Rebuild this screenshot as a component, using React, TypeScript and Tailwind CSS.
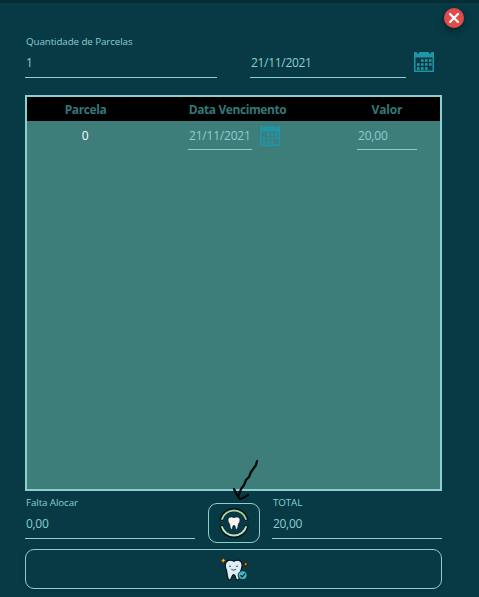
import React from "react";

const CALENDAR_DOTS = [
  [7, 8], [11, 8], [15, 8],
  [3, 12], [7, 12], [11, 12], [15, 12],
  [3, 16], [7, 16], [11, 16],
];

function CalendarIcon({ className = "" }: { className?: string }) {
  return (
    <svg width="20" height="20" viewBox="0 0 20 20" className={`shrink-0 ${className}`}>
      <path
        fillRule="evenodd"
        fill="#2195a8"
        d="M0 0H2.6Q2.8 1.6 4 1.6T5.4 0H14.6Q14.8 1.6 16 1.6T17.4 0H20V20H0ZM1.5 5.5V18.5H18.5V5.5Z"
      />
      {CALENDAR_DOTS.map(([x, y]) => (
        <rect key={`${x}-${y}`} x={x} y={y - 0.8} width="2.6" height="2.6" fill="#2195a8" />
      ))}
    </svg>
  );
}

function CloseButton() {
  return (
    <button className="size-5 rounded-full bg-[#e24b4b] shadow-[0_3px_7px_rgba(0,0,0,0.4)]">
      <svg width="20" height="20" viewBox="0 0 20 20">
        <path d="M6 6L14 14M14 6L6 14" stroke="#fff" strokeWidth="2.2" strokeLinecap="round" />
      </svg>
    </button>
  );
}

function ToothRing() {
  return (
    <svg width="28" height="28" viewBox="0 0 28 28" overflow="visible">
      <g fill="none">
        <g stroke="#04171b" strokeWidth="3.8">
          <path d="M1.2 11.5A13 13 0 0 1 26.8 11.5" />
          <path d="M1.2 16.5A13 13 0 0 0 26.8 16.5" />
        </g>
        <path d="M1.7 10.7A12.8 12.8 0 0 1 26.3 10.7" stroke="#a9cda0" strokeWidth="1.9" />
        <path d="M1.7 17.3A12.8 12.8 0 0 0 26.3 17.3" stroke="#c5dfc2" strokeWidth="1.9" />
      </g>
      <path
        d="M14 8.7C11.5 7.2 8.3 7.8 8 10.7C7.8 13.2 9.6 14.1 9.9 16.2C10.2 18.4 10.1 20.3 11.5 20.3C12.8 20.3 12.4 16.2 14 16.2S15.2 20.3 16.5 20.3C17.9 20.3 17.8 18.4 18.1 16.2C18.4 14.1 20.2 13.2 20 10.7C19.7 7.8 16.5 7.2 14 8.7Z"
        fill="#faf5f3"
        stroke="#111c20"
        strokeWidth="0.7"
      />
    </svg>
  );
}

function HappyTooth() {
  return (
    <svg width="28" height="24" viewBox="0 0 28 24" overflow="visible">
      <path
        d="M14 4.2C10.6 2.5 5.8 2.8 5.3 7.5C4.9 11 6.5 12.3 6.9 15.5C7.3 18.6 7.5 23 9.8 23C12 23 11.3 17.7 13.7 17.7S15 23 17.2 23C19.5 23 20.2 18.4 20.6 15.2C21 12.2 22.4 10.5 22.1 7.5C21.6 2.8 17.4 2.5 14 4.2Z"
        fill="#dcecf7"
        stroke="#081318"
        strokeWidth="1.2"
      />
      <path d="M9 9.5Q10 8.5 11 9.5M16 9.5Q17 8.5 18 9.5M11.3 12.2Q13.6 14.3 16 12.2" fill="none" stroke="#3c4d57" strokeWidth="1" />
      <circle cx="22.7" cy="18.2" r="4.5" fill="#3eb4c2" stroke="#092229" strokeWidth="0.9" />
      <path d="M20.5 18.2L22.2 19.8L25.1 16.7" fill="none" stroke="#08282f" strokeWidth="1.2" />
      <path d="M3.3 .7L4.3 2.6L6 3.6L4.3 4.6L3.3 6.2L2.3 4.6L.6 3.6L2.3 2.6Z" fill="#efb22e" stroke="#3d240a" strokeWidth=".8" />
      <path d="M25.7 4.6L26.7 6.3L28.2 7.1L26.7 7.9L25.7 9.6L24.7 7.9L23.2 7.1L24.7 6.3Z" fill="#c77b16" stroke="#241607" strokeWidth=".9" />
    </svg>
  );
}

function Field({ label, value, className }: { label?: string; value: string; className: string }) {
  return (
    <label className={`flex h-[43px] flex-col border-b border-[#8ccfcd] pl-px ${className}`}>
      <span className="h-[14px] whitespace-nowrap text-[9.8px] leading-[13px] tracking-[-0.1px]">{label}</span>
      <span className="mt-[6px] h-[16px] text-[12px] leading-[16px] tracking-[-0.31px]">{value}</span>
    </label>
  );
}

export default function App() {
  return (
    <main className="flex h-[597px] w-[479px] flex-col border-t-[3px] border-[#042d35] bg-[#073a45] pl-[25px] font-['Open_Sans','Noto_Sans',sans-serif] text-[#8ccfcd]">
      <div className="flex h-[32px] justify-end pr-[15px] pt-[5px]">
        <CloseButton />
      </div>
      <section className="flex h-[60px] w-[417px]">
        <Field label="Quantidade de Parcelas" value="1" className="w-[192px]" />
        <Field value="21/11/2021" className="ml-[33px] w-[156px]" />
        <CalendarIcon className="ml-[8px] mt-[17px]" />
      </section>
      <section className="relative h-[396px] w-[417px] shrink-0 border-2 border-[#8ccfcd] bg-[#3d7e7b]">
        <div className="flex h-[24px] items-center bg-black text-[12px] font-bold leading-[24px] text-[#337879]">
          <span className="w-[117px] pt-px text-center tracking-[-0.4px]">Parcela</span>
          <span className="w-[187px] pt-px text-center tracking-[-0.42px]">Data Vencimento</span>
          <span className="w-[109px] pl-[3px] pt-px text-center tracking-[-0.15px]">Valor</span>
        </div>
        <div className="flex text-[12px] tracking-[-0.2px]">
          <span className="w-[116px] pt-[6px] text-center leading-[17px] text-white">0</span>
          <span className="ml-[45px] h-[29px] w-[64px] whitespace-nowrap border-b border-[#8ccfcd] pl-px pt-[6px] leading-[17px]">21/11/2021</span>
          <CalendarIcon className="ml-[8px] mt-[5px]" />
          <span className="ml-[77px] h-[29px] w-[60px] border-b border-[#8ccfcd] pl-px pt-[6px] leading-[17px]">20,00</span>
        </div>
        <svg className="absolute left-[204px] top-[361px]" width="32" height="46" viewBox="0 0 32 46">
          <path d="M26 3L25 7L20 14L18 19L15 22L13 27L10 31L8 37M3 31L6 37L9 41L12 40L17 37" fill="none" stroke="#00080a" strokeWidth="2.2" strokeLinecap="round" strokeLinejoin="round" />
        </svg>
      </section>
      <section className="flex h-[58px] w-[417px] shrink-0 pt-[5px]">
        <Field label="Falta Alocar" value="0,00" className="w-[170px]" />
        <button className="ml-[13px] mt-[7px] flex h-[40px] w-[52px] items-center justify-center rounded-[9px] border border-[#8ccfcd]">
          <ToothRing />
        </button>
        <Field label="TOTAL" value="20,00" className="ml-[12px] w-[170px]" />
      </section>
      <button className="flex h-[40px] w-[417px] shrink-0 items-center justify-center rounded-[9px] border border-[#8ccfcd] shadow-[0_2px_5px_rgba(0,0,0,0.12)]">
        <HappyTooth />
      </button>
    </main>
  );
}
